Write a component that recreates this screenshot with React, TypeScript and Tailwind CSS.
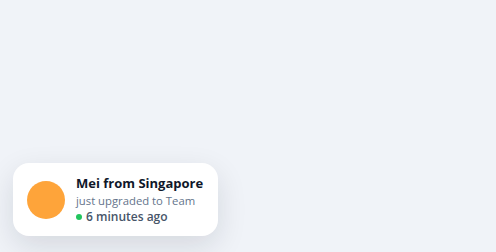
export default function App() {
  return (
    <div className="flex h-[252px] w-full flex-col justify-end bg-[#f0f3f8] pb-4 pl-[13px]" style={{ fontFamily: '"Open Sans", sans-serif' }}>
      <div className="flex h-[73px] w-[205px] items-center gap-[11px] rounded-2xl bg-white pl-[14px] pr-3 shadow-[0_10px_30px_rgba(15,23,42,0.12)]">
        <div className="h-[38px] w-[38px] shrink-0 rounded-full bg-[#fea43a]" />
        <div className="flex flex-col">
          <p className="text-[13px] font-bold leading-[17px] text-[#0f172a]">Mei from Singapore</p>
          <p className="text-[11.3px] leading-[17px] text-[#64748b]">just upgraded to Team</p>
          <div className="flex items-center gap-[4px]">
            <span className="h-[6px] w-[6px] rounded-full bg-[#22c55e]" />
            <p className="text-[12px] font-semibold leading-[16px] text-[#475569]">6 minutes ago</p>
          </div>
        </div>
      </div>
    </div>
  );
}
